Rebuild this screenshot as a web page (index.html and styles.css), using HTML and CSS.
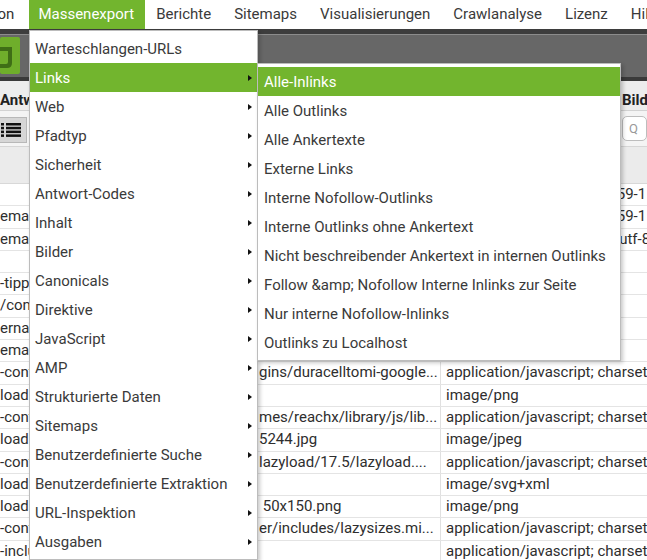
FILE: index.html
```html
<!DOCTYPE html>
<html lang="de">
<head>
<meta charset="utf-8">
<title>Massenexport</title>
<link rel="stylesheet" href="styles.css">
</head>
<body>
<div class="app">
  <nav class="menubar">
    <div class="mb-item cut">Konfiguration</div>
    <div class="mb-item active">Massenexport</div>
    <div class="mb-item">Berichte</div>
    <div class="mb-item">Sitemaps</div>
    <div class="mb-item">Visualisierungen</div>
    <div class="mb-item">Crawlanalyse</div>
    <div class="mb-item">Lizenz</div>
    <div class="mb-item">Hilfe</div>
  </nav>
  <div class="dark-strip"></div>
  <div class="logo-band">
    <svg class="logo" width="20" height="37" viewBox="0 0 20 37">
      <rect x="0" y="0" width="20" height="37" rx="2" fill="#6fae2b"/>
      <path d="M0 10 H12 V26 Q12 31 7 31 H0 V27 H6 Q8 27 8 25 V14 H0 Z" fill="#3f6e16"/>
    </svg>
  </div>
  <div class="dark-line"></div>
  <div class="tabs">
    <div class="tab"><span>Antwort-Codes</span></div>
    <div class="tab"><span>Bilder</span></div>
  </div>
  <div class="toolbar">
    <div class="tool-left">
      <div class="list-btn">
        <svg width="20" height="14" viewBox="0 0 20 14">
          <rect x="0" y="0" width="3" height="2.5" fill="#111"/>
          <rect x="5" y="0" width="15" height="2.5" fill="#111"/>
          <rect x="0" y="3.8" width="3" height="2.5" fill="#111"/>
          <rect x="5" y="3.8" width="15" height="2.5" fill="#111"/>
          <rect x="0" y="7.6" width="3" height="2.5" fill="#111"/>
          <rect x="5" y="7.6" width="15" height="2.5" fill="#111"/>
          <rect x="0" y="11.4" width="3" height="2.5" fill="#111"/>
          <rect x="5" y="11.4" width="15" height="2.5" fill="#111"/>
        </svg>
      </div>
    </div>
    <div class="tool-right">
      <div class="search-box">Q</div>
    </div>
  </div>
  <div class="col-header"></div>
  <div class="rows">
    <div class="row"><div class="c1"></div><div class="c2">https://www.example.de/</div><div class="c3">text/html; charset=ISO-8859-1</div></div>
    <div class="row"><div class="c1">emap.xml</div><div class="c2">https://www.example.de/sitemap.xml</div><div class="c3">text/html; charset=ISO-8859-1</div></div>
    <div class="row"><div class="c1">emap_index.xml</div><div class="c2">https://www.example.de/sitemap_index.xml</div><div class="c3">application/json; charset=utf-8</div></div>
    <div class="row"><div class="c1"></div><div class="c2"></div><div class="c3">image/png</div></div>
    <div class="row"><div class="c1">-tipps/</div><div class="c2"></div><div class="c3">text/html</div></div>
    <div class="row"><div class="c1">/contact/</div><div class="c2"></div><div class="c3">text/html</div></div>
    <div class="row"><div class="c1">ernal/</div><div class="c2"></div><div class="c3">text/html</div></div>
    <div class="row"><div class="c1">emap/</div><div class="c2"></div><div class="c3">text/html</div></div>
    <div class="row"><div class="c1">-content/plugins</div><div class="c2">gins/duracelltomi-google...</div><div class="c3">application/javascript; charset=utf-8</div></div>
    <div class="row"><div class="c1">loads/logo.png</div><div class="c2"></div><div class="c3">image/png</div></div>
    <div class="row"><div class="c1">-content/themes</div><div class="c2">mes/reachx/library/js/lib...</div><div class="c3">application/javascript; charset=utf-8</div></div>
    <div class="row"><div class="c1">loads/2020/05</div><div class="c2">5244.jpg</div><div class="c3">image/jpeg</div></div>
    <div class="row"><div class="c1">-content/plugins</div><div class="c2">lazyload/17.5/lazyload....</div><div class="c3">application/javascript; charset=utf-8</div></div>
    <div class="row"><div class="c1">loads/icon.svg</div><div class="c2"></div><div class="c3">image/svg+xml</div></div>
    <div class="row"><div class="c1">loads/2020/06</div><div class="c2">&nbsp;50x150.png</div><div class="c3">image/png</div></div>
    <div class="row"><div class="c1">-content/plugins</div><div class="c2">er/includes/lazysizes.mi...</div><div class="c3">application/javascript; charset=utf-8</div></div>
    <div class="row"><div class="c1">-includes/js</div><div class="c2"></div><div class="c3">application/javascript; charset=utf-8</div></div>
  </div>

  <div class="dropdown">
    <div class="item">Warteschlangen-URLs</div>
    <div class="item active">Links<span class="arrow"></span></div>
    <div class="item">Web<span class="arrow"></span></div>
    <div class="item">Pfadtyp<span class="arrow"></span></div>
    <div class="item">Sicherheit<span class="arrow"></span></div>
    <div class="item">Antwort-Codes<span class="arrow"></span></div>
    <div class="item">Inhalt<span class="arrow"></span></div>
    <div class="item">Bilder<span class="arrow"></span></div>
    <div class="item">Canonicals<span class="arrow"></span></div>
    <div class="item">Direktive<span class="arrow"></span></div>
    <div class="item">JavaScript<span class="arrow"></span></div>
    <div class="item">AMP<span class="arrow"></span></div>
    <div class="item">Strukturierte Daten<span class="arrow"></span></div>
    <div class="item">Sitemaps<span class="arrow"></span></div>
    <div class="item">Benutzerdefinierte Suche<span class="arrow"></span></div>
    <div class="item">Benutzerdefinierte Extraktion<span class="arrow"></span></div>
    <div class="item">URL-Inspektion<span class="arrow"></span></div>
    <div class="item">Ausgaben<span class="arrow"></span></div>
  </div>

  <div class="submenu">
    <div class="item active">Alle-Inlinks</div>
    <div class="item">Alle Outlinks</div>
    <div class="item">Alle Ankertexte</div>
    <div class="item">Externe Links</div>
    <div class="item">Interne Nofollow-Outlinks</div>
    <div class="item">Interne Outlinks ohne Ankertext</div>
    <div class="item">Nicht beschreibender Ankertext in internen Outlinks</div>
    <div class="item">Follow &amp;amp; Nofollow Interne Inlinks zur Seite</div>
    <div class="item">Nur interne Nofollow-Inlinks</div>
    <div class="item">Outlinks zu Localhost</div>
  </div>
</div>
</body>
</html>
```

FILE: styles.css
```css
* { box-sizing: border-box; }
html, body { margin: 0; padding: 0; }
body {
  width: 647px;
  height: 560px;
  overflow: hidden;
  background: #fff;
  font-family: Roboto, "Noto Sans", "Liberation Sans", sans-serif;
  font-size: 15px;
  color: #333;
}
.app {
  position: relative;
  width: 647px;
  height: 560px;
  overflow: hidden;
}

/* menubar */
.menubar {
  display: flex;
  height: 29px;
  background: #fff;
  white-space: nowrap;
  overflow: hidden;
}
.mb-item {
  flex: none;
  padding: 0 11.5px;
  line-height: 29px;
  color: #3a3a3a;
}
.mb-item.cut {
  margin-left: -75px;
  padding: 0 15px 0 0;
  color: #333;
}
.mb-item.active {
  background: #72b52e;
  color: #fff;
  padding: 0 10.5px 0 9px;
}

/* app chrome behind */
.dark-strip {
  height: 6px;
  background: #3d3d3d;
  border-bottom: 1px solid #8c8c8c;
}
.logo-band {
  height: 42px;
  background: #676767;
  padding-top: 2px;
}
.logo { display: block; }
.dark-line {
  height: 4px;
  background: #3a3a3a;
}
.tabs {
  display: grid;
  grid-template-columns: 621px 1fr;
  height: 30px;
  background: #ededed;
  border-bottom: 1px solid #d2d2d2;
  font-weight: bold;
  color: #222;
  white-space: nowrap;
}
.tab {
  overflow: hidden;
  line-height: 30px;
  padding-top: 4px;
}
.tab:last-child { padding-left: 1px; }
.toolbar {
  display: grid;
  grid-template-columns: 621px 1fr;
  height: 36px;
  background: #f4f4f4;
  border-bottom: 1px solid #d6d6d6;
}
.tool-left { padding-top: 6px; }
.list-btn {
  width: 27px;
  height: 26px;
  background: #d6d6d6;
  border: 1px solid #b8b8b8;
  border-left: none;
  display: flex;
  align-items: center;
  justify-content: flex-end;
  padding-right: 5px;
}
.tool-right { padding: 5px 0 0 1px; }
.search-box {
  height: 25px;
  background: #fff;
  border: 1px solid #bdbdbd;
  border-radius: 5px;
  color: #999;
  padding-left: 6px;
  line-height: 23px;
  font-size: 13px;
}
.col-header {
  height: 37px;
  background: #ebebeb;
  border-bottom: 1px solid #d8d8d8;
}

/* rows */
.rows { background: #fff; }
.row {
  display: grid;
  grid-template-columns: 257px 184px 1fr;
  height: 22.3px;
  line-height: 21px;
  border-bottom: 1px solid #e4e4e4;
  white-space: nowrap;
  color: #2e2e2e;
}
.row > div { overflow: hidden; }
.c2 {
  border-right: 1px solid #e0e0e0;
  padding-left: 2px;
}
.c3 { padding-left: 5px; }

/* dropdown menus */
.dropdown, .submenu {
  position: absolute;
  background: #fff;
  border: 1px solid #bcbcbc;
  padding: 3px 0;
  box-shadow: 2px 2px 4px rgba(0, 0, 0, 0.22);
  white-space: nowrap;
}
.dropdown {
  left: 29px;
  top: 30px;
  width: 229px;
  z-index: 1;
}
.submenu {
  left: 257px;
  top: 63px;
  width: 364px;
  z-index: 2;
}
.item {
  height: 29px;
  display: flex;
  align-items: center;
  justify-content: space-between;
  padding: 0 5px 0 5px;
  color: #3a3a3a;
}
.submenu .item { padding-left: 6px; }
.item.active {
  background: #72b52e;
  color: #fff;
}
.arrow {
  width: 0;
  height: 0;
  border-left: 4px solid #111;
  border-top: 3.5px solid transparent;
  border-bottom: 3.5px solid transparent;
}
```
